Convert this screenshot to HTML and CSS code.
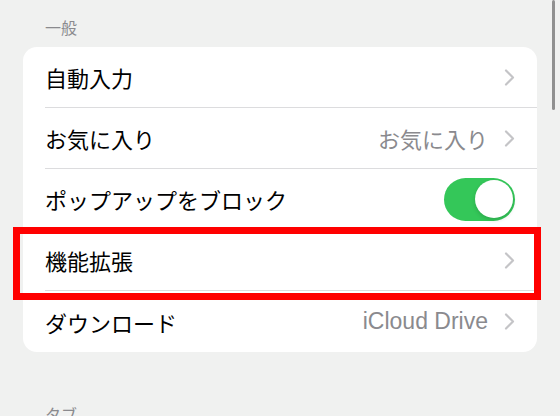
FILE: index.html
```html
<!DOCTYPE html>
<html lang="ja">
<head>
    <meta charset="UTF-8">
    <meta name="viewport" content="width=device-width, initial-scale=1.0">
    <title>Safari 設定</title>
    <link rel="stylesheet" href="styles.css">
</head>
<body>
    <div class="scrollbar"></div>

    <div class="section-title">一般</div>
    <div class="card">
        <div class="row">
            <span class="label">自動入力</span>
            <span class="chevron"><svg width="11" height="17" viewBox="0 0 11 17"><path d="M2 1.5 L9 8.5 L2 15.5" fill="none" stroke="#c4c4c7" stroke-width="2.2" stroke-linecap="round" stroke-linejoin="round"/></svg></span>
        </div>
        <div class="row">
            <span class="label">お気に入り</span>
            <span class="value">お気に入り</span>
            <span class="chevron"><svg width="11" height="17" viewBox="0 0 11 17"><path d="M2 1.5 L9 8.5 L2 15.5" fill="none" stroke="#c4c4c7" stroke-width="2.2" stroke-linecap="round" stroke-linejoin="round"/></svg></span>
        </div>
        <div class="row">
            <span class="label">ポップアップをブロック</span>
            <span class="toggle on"><span class="knob"></span></span>
        </div>
        <div class="row marked">
            <span class="label">機能拡張</span>
            <span class="chevron"><svg width="11" height="17" viewBox="0 0 11 17"><path d="M2 1.5 L9 8.5 L2 15.5" fill="none" stroke="#c4c4c7" stroke-width="2.2" stroke-linecap="round" stroke-linejoin="round"/></svg></span>
        </div>
        <div class="row">
            <span class="label">ダウンロード</span>
            <span class="value latin">iCloud Drive</span>
            <span class="chevron"><svg width="11" height="17" viewBox="0 0 11 17"><path d="M2 1.5 L9 8.5 L2 15.5" fill="none" stroke="#c4c4c7" stroke-width="2.2" stroke-linecap="round" stroke-linejoin="round"/></svg></span>
        </div>
    </div>

    <div class="section-title next">タブ</div>
</body>
</html>
```

FILE: styles.css
```css
body {
    margin: 0;
    padding: 0 23px 0 23px;
    width: 514px;
    height: 416px;
    overflow: hidden;
    background-color: #f0f1f0;
    font-family: "Noto Sans CJK JP", "Noto Sans", sans-serif;
    color: #000;
}

.scrollbar {
    position: absolute;
    top: 0;
    left: 552px;
    width: 3px;
    height: 110px;
    border-radius: 2px;
    background-color: #909090;
}

.section-title {
    padding: 15px 0 0 22px;
    height: 32px;
    font-size: 16px;
    line-height: 24px;
    color: #8a8a8e;
}

.section-title.next {
    padding-top: 50px;
}

.card {
    background-color: #fff;
    border-radius: 14px;
    padding-left: 22px;
}

.row {
    display: flex;
    align-items: center;
    height: 60px;
    padding-right: 22px;
    border-bottom: 1px solid #dcdcde;
    font-size: 22px;
}

.row:last-child {
    border-bottom: none;
    height: 61px;
}

.label {
    flex: 1;
}

.value {
    color: #8a8a8e;
    margin-right: 16px;
}

.value.latin {
    font-family: "Liberation Sans", "Noto Sans", sans-serif;
    font-size: 23px;
}

.chevron {
    display: flex;
    height: 17px;
}

.toggle {
    display: flex;
    align-items: center;
    width: 71px;
    height: 43px;
    border-radius: 22px;
    padding: 0 2.5px;
    box-sizing: border-box;
    background-color: #e5e5ea;
}

.toggle.on {
    background-color: #34c759;
    justify-content: flex-end;
}

.knob {
    width: 38px;
    height: 38px;
    border-radius: 50%;
    background-color: #fff;
    box-shadow: 0 2px 4px rgba(0, 0, 0, 0.15);
}

.marked {
    position: relative;
}

.marked::after {
    content: "";
    position: absolute;
    left: -32px;
    right: -4px;
    top: -3px;
    bottom: -10px;
    border: 7px solid #ff0000;
}
```
